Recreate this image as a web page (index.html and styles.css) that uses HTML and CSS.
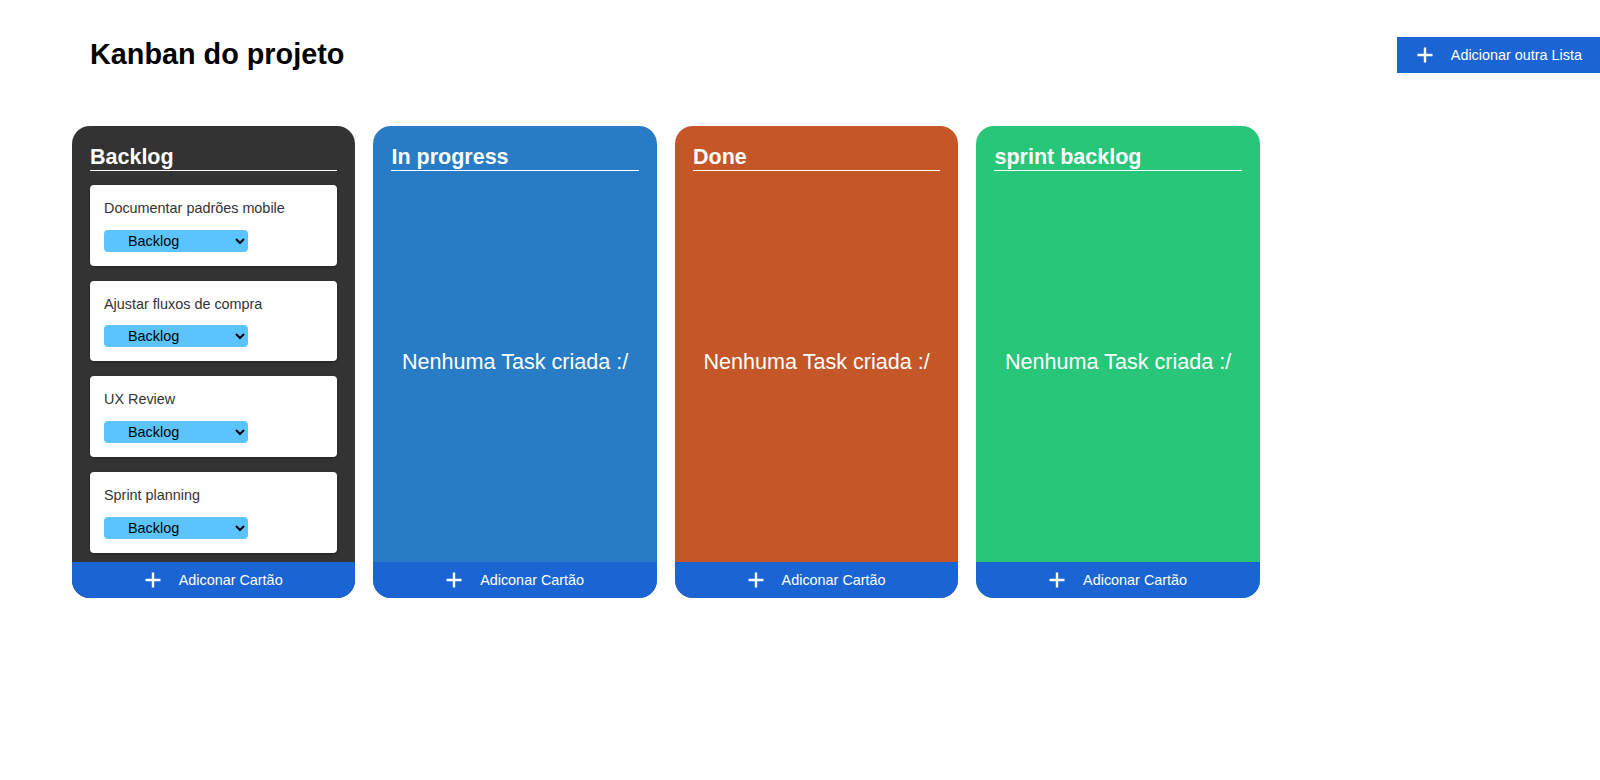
FILE: index.html
```html
<!DOCTYPE html>
<html lang="pt-BR">
<head>
<meta charset="utf-8">
<title>Kanban do projeto</title>
<link rel="stylesheet" href="styles.css">
</head>
<body>
<header class="topbar">
  <h1 class="page-title">Kanban do projeto</h1>
  <button class="add-list">
    <svg class="plus" viewBox="0 0 16 16" width="16" height="16"><path d="M8 0.5V15.5M0.5 8H15.5" stroke="#fff" stroke-width="2.4" fill="none"/></svg>
    <span>Adicionar outra Lista</span>
  </button>
</header>

<main class="board">
  <section class="column col-backlog">
    <div class="column-body">
      <h2 class="column-title">Backlog</h2>
      <div class="cards">
        <div class="card">
          <p class="card-title">Documentar padrões mobile</p>
          <select class="status"><option>Backlog</option><option>In progress</option><option>Done</option><option>sprint backlog</option></select>
        </div>
        <div class="card">
          <p class="card-title">Ajustar fluxos de compra</p>
          <select class="status"><option>Backlog</option><option>In progress</option><option>Done</option><option>sprint backlog</option></select>
        </div>
        <div class="card">
          <p class="card-title">UX Review</p>
          <select class="status"><option>Backlog</option><option>In progress</option><option>Done</option><option>sprint backlog</option></select>
        </div>
        <div class="card">
          <p class="card-title">Sprint planning</p>
          <select class="status"><option>Backlog</option><option>In progress</option><option>Done</option><option>sprint backlog</option></select>
        </div>
      </div>
    </div>
    <button class="add-card">
      <svg class="plus" viewBox="0 0 16 16" width="16" height="16"><path d="M8 0.5V15.5M0.5 8H15.5" stroke="#fff" stroke-width="2.4" fill="none"/></svg>
      <span>Adiconar Cartão</span>
    </button>
  </section>

  <section class="column col-progress">
    <div class="column-body">
      <h2 class="column-title">In progress</h2>
      <div class="empty">Nenhuma Task criada :/</div>
    </div>
    <button class="add-card">
      <svg class="plus" viewBox="0 0 16 16" width="16" height="16"><path d="M8 0.5V15.5M0.5 8H15.5" stroke="#fff" stroke-width="2.4" fill="none"/></svg>
      <span>Adiconar Cartão</span>
    </button>
  </section>

  <section class="column col-done">
    <div class="column-body">
      <h2 class="column-title">Done</h2>
      <div class="empty">Nenhuma Task criada :/</div>
    </div>
    <button class="add-card">
      <svg class="plus" viewBox="0 0 16 16" width="16" height="16"><path d="M8 0.5V15.5M0.5 8H15.5" stroke="#fff" stroke-width="2.4" fill="none"/></svg>
      <span>Adiconar Cartão</span>
    </button>
  </section>

  <section class="column col-sprint">
    <div class="column-body">
      <h2 class="column-title">sprint backlog</h2>
      <div class="empty">Nenhuma Task criada :/</div>
    </div>
    <button class="add-card">
      <svg class="plus" viewBox="0 0 16 16" width="16" height="16"><path d="M8 0.5V15.5M0.5 8H15.5" stroke="#fff" stroke-width="2.4" fill="none"/></svg>
      <span>Adiconar Cartão</span>
    </button>
  </section>
</main>
</body>
</html>
```

FILE: styles.css
```css
* { box-sizing: border-box; }

body {
  margin: 0;
  font-family: "Liberation Sans", Arial, sans-serif;
  background: #fff;
  color: #000;
}

.topbar {
  margin-top: 36px;
  height: 37px;
  display: flex;
  align-items: center;
  justify-content: space-between;
  padding-left: 90px;
}

.page-title {
  margin: 0;
  font-size: 28.8px;
  font-weight: bold;
  line-height: 33px;
}

.add-list {
  height: 36px;
  margin-top: 1px;
  display: flex;
  align-items: center;
  gap: 18px;
  padding: 0 18px 0 20px;
  border: none;
  background: #1b64d3;
  color: #fff;
  font-family: inherit;
  font-size: 14.4px;
  cursor: pointer;
}

.plus { display: block; flex: none; }

.board {
  display: flex;
  gap: 18.2px;
  padding-left: 72px;
  margin-top: 53px;
  align-items: flex-start;
}

.column {
  width: 283.3px;
  height: 472px;
  border-radius: 18px;
  overflow: hidden;
  display: flex;
  flex-direction: column;
}

.col-backlog { background: #333333; }
.col-progress { background: #287bc5; }
.col-done { background: #c45628; }
.col-sprint { background: #27c678; }

.column-body {
  flex: 1;
  min-height: 0;
  padding: 19px 18px 8px;
  display: flex;
  flex-direction: column;
  overflow: hidden;
}

.column-title {
  margin: 0;
  font-size: 21.5px;
  font-weight: bold;
  line-height: 24px;
  color: #fff;
  padding-bottom: 1px;
  border-bottom: 1px solid #fff;
}

.cards {
  margin-top: 14px;
  display: flex;
  flex-direction: column;
  gap: 15px;
}

.card {
  background: #fff;
  border-radius: 4px;
  padding: 15px 14px 14px;
  box-shadow: 0 1px 3px rgba(0, 0, 0, 0.35);
}

.card-title {
  margin: 0 0 13px;
  font-size: 14.4px;
  line-height: 16.7px;
  color: #333;
}

.status {
  display: block;
  width: 144px;
  height: 22px;
  border: none;
  border-radius: 4px;
  background-color: #5bc4fe;
  color: #000;
  font-family: inherit;
  font-size: 14.4px;
  padding: 0 4px 0 20px;
}

.empty {
  flex: 1;
  margin-top: 14px;
  padding-bottom: 16px;
  display: flex;
  align-items: center;
  justify-content: center;
  color: #fff;
  font-size: 21.6px;
}

.add-card {
  flex: none;
  height: 36px;
  display: flex;
  align-items: center;
  justify-content: center;
  gap: 18px;
  border: none;
  background: #1b64d3;
  color: #fff;
  font-family: inherit;
  font-size: 14.4px;
  cursor: pointer;
  width: 100%;
}
```
